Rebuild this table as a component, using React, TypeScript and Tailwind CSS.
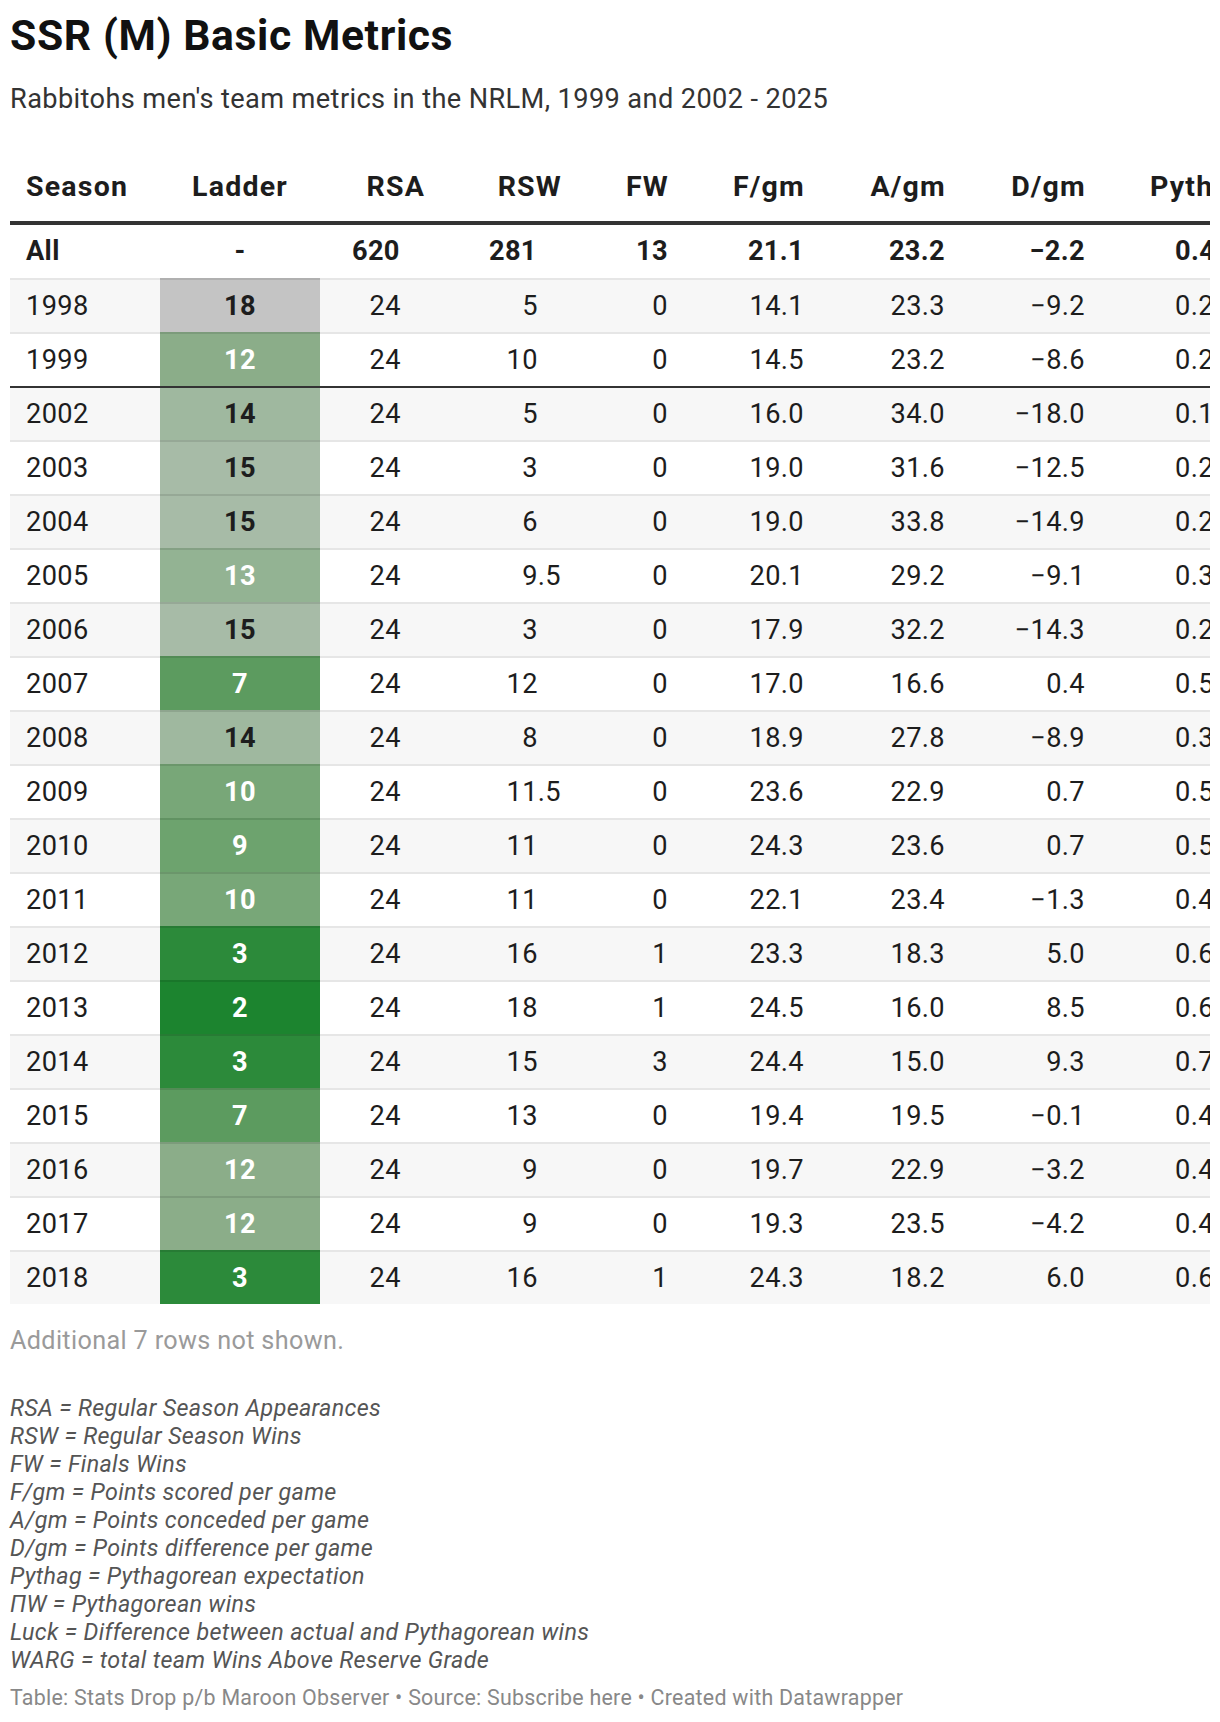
import React from "react";

type Row = {
  season: string;
  ladder: string;
  rsa: string;
  rsw: string;
  fw: string;
  f: string;
  a: string;
  d: string;
  p: string;
  pw: string;
  luck: string;
  warg: string;
};

const rows: Row[] = [
  { season: "1998", ladder: "18", rsa: "24", rsw: "5", fw: "0", f: "14.1", a: "23.3", d: "−9.2", p: "0.27", pw: "6.5", luck: "−1.5", warg: "−4.1" },
  { season: "1999", ladder: "12", rsa: "24", rsw: "10", fw: "0", f: "14.5", a: "23.2", d: "−8.6", p: "0.28", pw: "6.8", luck: "3.2", warg: "−1.2" },
  { season: "2002", ladder: "14", rsa: "24", rsw: "5", fw: "0", f: "16.0", a: "34.0", d: "−18.0", p: "0.18", pw: "4.3", luck: "0.7", warg: "−5.3" },
  { season: "2003", ladder: "15", rsa: "24", rsw: "3", fw: "0", f: "19.0", a: "31.6", d: "−12.5", p: "0.27", pw: "6.5", luck: "−3.5", warg: "−6.8" },
  { season: "2004", ladder: "15", rsa: "24", rsw: "6", fw: "0", f: "19.0", a: "33.8", d: "−14.9", p: "0.24", pw: "5.8", luck: "0.2", warg: "−4.6" },
  { season: "2005", ladder: "13", rsa: "24", rsw: "9.5", fw: "0", f: "20.1", a: "29.2", d: "−9.1", p: "0.32", pw: "7.7", luck: "1.8", warg: "−2.4" },
  { season: "2006", ladder: "15", rsa: "24", rsw: "3", fw: "0", f: "17.9", a: "32.2", d: "−14.3", p: "0.24", pw: "5.8", luck: "−2.8", warg: "−6.1" },
  { season: "2007", ladder: "7", rsa: "24", rsw: "12", fw: "0", f: "17.0", a: "16.6", d: "0.4", p: "0.51", pw: "12.2", luck: "−0.2", warg: "1.9" },
  { season: "2008", ladder: "14", rsa: "24", rsw: "8", fw: "0", f: "18.9", a: "27.8", d: "−8.9", p: "0.32", pw: "7.7", luck: "0.3", warg: "−2.9" },
  { season: "2009", ladder: "10", rsa: "24", rsw: "11.5", fw: "0", f: "23.6", a: "22.9", d: "0.7", p: "0.51", pw: "12.3", luck: "−0.8", warg: "1.1" },
  { season: "2010", ladder: "9", rsa: "24", rsw: "11", fw: "0", f: "24.3", a: "23.6", d: "0.7", p: "0.51", pw: "12.3", luck: "−1.3", warg: "0.8" },
  { season: "2011", ladder: "10", rsa: "24", rsw: "11", fw: "0", f: "22.1", a: "23.4", d: "−1.3", p: "0.47", pw: "11.3", luck: "−0.3", warg: "0.4" },
  { season: "2012", ladder: "3", rsa: "24", rsw: "16", fw: "1", f: "23.3", a: "18.3", d: "5.0", p: "0.62", pw: "14.9", luck: "1.1", warg: "4.6" },
  { season: "2013", ladder: "2", rsa: "24", rsw: "18", fw: "1", f: "24.5", a: "16.0", d: "8.5", p: "0.68", pw: "16.3", luck: "1.7", warg: "6.2" },
  { season: "2014", ladder: "3", rsa: "24", rsw: "15", fw: "3", f: "24.4", a: "15.0", d: "9.3", p: "0.72", pw: "17.3", luck: "−2.3", warg: "5.4" },
  { season: "2015", ladder: "7", rsa: "24", rsw: "13", fw: "0", f: "19.4", a: "19.5", d: "−0.1", p: "0.49", pw: "11.9", luck: "1.1", warg: "2.0" },
  { season: "2016", ladder: "12", rsa: "24", rsw: "9", fw: "0", f: "19.7", a: "22.9", d: "−3.2", p: "0.43", pw: "10.3", luck: "−1.3", warg: "−0.7" },
  { season: "2017", ladder: "12", rsa: "24", rsw: "9", fw: "0", f: "19.3", a: "23.5", d: "−4.2", p: "0.40", pw: "9.6", luck: "−0.6", warg: "−1.1" },
  { season: "2018", ladder: "3", rsa: "24", rsw: "16", fw: "1", f: "24.3", a: "18.2", d: "6.0", p: "0.64", pw: "15.4", luck: "0.6", warg: "4.9" },
];

const ladderStyle: Record<string, { bg: string; dark: boolean }> = {
  "18": { bg: "bg-[#c4c4c4]", dark: true },
  "15": { bg: "bg-[#a7bba7]", dark: true },
  "14": { bg: "bg-[#9fb89f]", dark: true },
  "13": { bg: "bg-[#93b393]", dark: false },
  "12": { bg: "bg-[#8bad89]", dark: false },
  "10": { bg: "bg-[#78a778]", dark: false },
  "9": { bg: "bg-[#6da36e]", dark: false },
  "7": { bg: "bg-[#5c9b5f]", dark: false },
  "3": { bg: "bg-[#2c8a3a]", dark: false },
  "2": { bg: "bg-[#1c842f]", dark: false },
};

const GRID =
  "grid grid-cols-[150px_160px_120px_137px_107px_136px_141px_140px_170px_130px_130px_130px] w-[1621px]";

function Pad() {
  return <span className="invisible">.5</span>;
}

function withPad(v: string) {
  return v.includes(".") ? (
    v
  ) : (
    <>
      {v}
      <Pad />
    </>
  );
}

const H = "pb-[18px]";

export default function App() {
  return (
    <div className="bg-white font-[Roboto,sans-serif] text-[#1d1d1d] px-[10px] pt-[10px] pb-[10px] w-[1220px]">
      <h1 className="text-[42.7px] leading-[51px] font-bold tracking-[0.6px] text-[#111]">SSR (M) Basic Metrics</h1>
      <p className="mt-[22px] text-[27.2px] leading-[32.6px] tracking-[0.38px] text-[#333]">
        Rabbitohs men's team metrics in the NRLM, 1999 and 2002 - 2025
      </p>

      <div className="mt-[55px] w-[1200px] overflow-hidden">
        {/* Header */}
        <div
          className={`${GRID} text-[28.5px] leading-[32.6px] font-bold tracking-[1.2px] text-[#1d1d1d] border-b-4 border-[#333]`}
        >
          <div className={`pl-4 ${H}`}>Season</div>
          <div className={`text-center ${H}`}>Ladder</div>
          <div className={`text-right pr-[15px] ${H}`}>RSA</div>
          <div className={`text-right pr-[15px] ${H}`}>RSW</div>
          <div className={`text-right pr-[15px] ${H}`}>FW</div>
          <div className={`text-right pr-[15px] ${H}`}>F/gm</div>
          <div className={`text-right pr-[15px] ${H}`}>A/gm</div>
          <div className={`text-right pr-[15px] ${H}`}>D/gm</div>
          <div className={`pl-[49px] ${H}`}>Pythag</div>
          <div className={`text-right pr-[15px] ${H}`}>ΠW</div>
          <div className={`text-right pr-[15px] ${H}`}>Luck</div>
          <div className={`text-right pr-[15px] ${H}`}>WARG</div>
        </div>

        {/* All row */}
        <div className={`${GRID} h-[53px] items-center text-[27.2px] leading-[32.6px] font-bold tracking-[0.35px]`}>
          <div className="pl-4">All</div>
          <div className="text-center">-</div>
          <div className="text-right pr-4">{withPad("620")}</div>
          <div className="text-right pr-4">{withPad("281")}</div>
          <div className="text-right pr-4">13</div>
          <div className="text-right pr-4">21.1</div>
          <div className="text-right pr-4">23.2</div>
          <div className="text-right pr-4">−2.2</div>
          <div className="pl-[74px]">0.45</div>
          <div className="text-right pr-4">216.4</div>
          <div className="text-right pr-4">−2.1</div>
          <div className="text-right pr-4">−18.9</div>
        </div>

        {rows.map((r, i) => {
          const stripe = i % 2 === 0 ? "bg-[#f7f7f7]" : "bg-white";
          const sep = r.season === "2002";
          const border = sep ? "border-t-2 border-[#333]" : "border-t-2 border-[#e6e6e6]";
          const ls = ladderStyle[r.ladder];
          const ladderBorder = sep ? "border-t-2 border-[#333]" : "border-t-2 border-black/10";
          const cell = `h-[54px] flex items-center ${border}`;
          return (
            <div key={r.season} className={`${GRID} text-[27.2px] leading-[32.6px] tracking-[0.35px] ${stripe}`}>
              <div className={`${cell} pl-4`}>{r.season}</div>
              <div
                className={`h-[54px] flex items-center justify-center font-bold ${ladderBorder} ${ls.bg} ${
                  ls.dark ? "text-[#1d1d1d]" : "text-white"
                }`}
              >
                {r.ladder}
              </div>
              <div className={`${cell} justify-end pr-4`}>{withPad(r.rsa)}</div>
              <div className={`${cell} justify-end pr-4`}>{withPad(r.rsw)}</div>
              <div className={`${cell} justify-end pr-4`}>{r.fw}</div>
              <div className={`${cell} justify-end pr-4`}>{r.f}</div>
              <div className={`${cell} justify-end pr-4`}>{r.a}</div>
              <div className={`${cell} justify-end pr-4`}>{r.d}</div>
              <div className={`${cell} pl-[74px]`}>{r.p}</div>
              <div className={`${cell} justify-end pr-4`}>{r.pw}</div>
              <div className={`${cell} justify-end pr-4`}>{r.luck}</div>
              <div className={`${cell} justify-end pr-4`}>{r.warg}</div>
            </div>
          );
        })}
      </div>

      <p className="mt-[23px] text-[25.2px] leading-[28px] tracking-[0.35px] text-[#9a9a9a]">
        Additional 7 rows not shown.
      </p>

      <div className="mt-[40px] text-[23.3px] leading-[27.96px] tracking-[0.33px] italic text-[#555]">
        <div>RSA = Regular Season Appearances</div>
        <div>RSW = Regular Season Wins</div>
        <div>FW = Finals Wins</div>
        <div>F/gm = Points scored per game</div>
        <div>A/gm = Points conceded per game</div>
        <div>D/gm = Points difference per game</div>
        <div>Pythag = Pythagorean expectation</div>
        <div>ΠW = Pythagorean wins</div>
        <div>Luck = Difference between actual and Pythagorean wins</div>
        <div>WARG = total team Wins Above Reserve Grade</div>
      </div>

      <p className="mt-[10px] text-[21.4px] leading-[25.7px] tracking-[0.26px] text-[#888]">
        Table: Stats Drop p/b Maroon Observer • Source: Subscribe here • Created with Datawrapper
      </p>
    </div>
  );
}
